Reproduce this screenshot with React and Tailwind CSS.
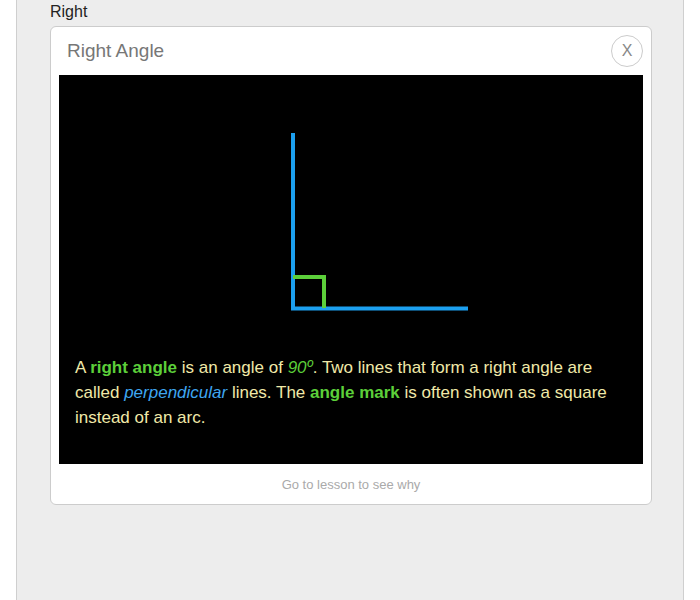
export default function App() {
  return (
    <div className="min-h-[600px] bg-white" style={{ fontFamily: '"Liberation Sans", Arial, sans-serif' }}>
      <div className="ml-4 w-[668px] min-h-[600px] border-x border-[#cfcfcf] bg-[#ededed] pl-[33px]">
        <div className="h-[26px] text-[16px] leading-[24px] text-[#222]">Right</div>
        <div className="w-[602px] rounded-[6px] border border-[#cccccc] bg-white">
          <div className="flex h-[48px] items-center justify-between pl-[16px] pr-[8px]">
            <span className="text-[19px] text-[#777]">Right Angle</span>
            <div className="flex h-[32px] w-[32px] items-center justify-center rounded-full border border-[#cccccc] text-[16px] text-[#888]">
              X
            </div>
          </div>
          <div className="mx-[8px] bg-black pb-[34px]">
            <svg width="584" height="280" viewBox="0 0 584 280" className="block">
              <path d="M234 58 V233.5 H409" fill="none" stroke="#1ca0f0" strokeWidth="4" />
              <path d="M234 202 H265 V233" fill="none" stroke="#5ccf3a" strokeWidth="4" />
            </svg>
            <p className="px-[16px] text-[17px] leading-[25px] text-[#f0e9a8]">
              A <b className="text-[#5ccf3a]">right angle</b> is an angle of{' '}
              <i className="text-[#5ccf3a]">90º</i>. Two lines that form a right angle are called{' '}
              <i className="text-[#3ea6f0]">perpendicular</i> lines. The{' '}
              <b className="text-[#5ccf3a]">angle mark</b> is often shown as a square instead of an arc.
            </p>
          </div>
          <div className="flex h-[40px] items-center justify-center pt-[1px] text-[13px] text-[#aaa]">
            Go to lesson to see why
          </div>
        </div>
      </div>
    </div>
  );
}
